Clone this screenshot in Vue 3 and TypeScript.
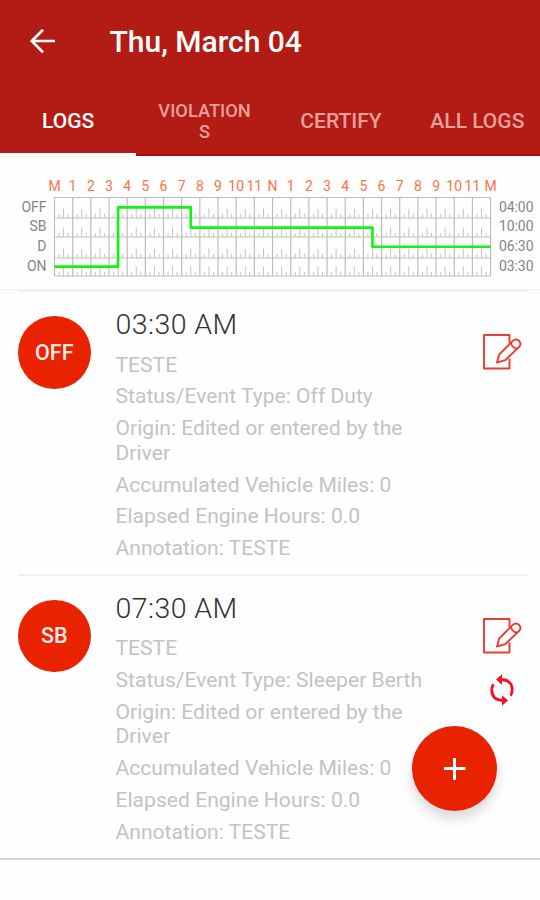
<script setup lang="ts">
interface LogEntry {
  code: string
  time: string
  lines: string[]
  refresh: boolean
}

const tabs: string[] = ['LOGS', 'VIOLATIONS', 'CERTIFY', 'ALL LOGS']

const hours: string[] = [
  'M', '1', '2', '3', '4', '5', '6', '7', '8', '9', '10', '11',
  'N', '1', '2', '3', '4', '5', '6', '7', '8', '9', '10', '11', 'M',
]

const left = 54.5
const step = 18.17
const right = left + step * 24
const rowEdges: number[] = [39.5, 60, 79, 100, 118]

const rows = [
  { label: 'OFF', total: '04:00', y: 49.2 },
  { label: 'SB', total: '10:00', y: 68.7 },
  { label: 'D', total: '06:30', y: 88.5 },
  { label: 'ON', total: '03:30', y: 108.2 },
]

const x = (hour: number): number => left + hour * step

const ticks = rowEdges.slice(1).map((edge) =>
  hours.slice(0, 24).map((_, h) =>
    `M${x(h + 0.25)} ${edge}v-4M${x(h + 0.5)} ${edge}v-9.5M${x(h + 0.75)} ${edge}v-4`,
  ).join(''),
).join('')

const dutyLine = `M${x(0)} 108.6H${x(3.5)}V49.4H${x(7.5)}V69.6H${x(17.5)}V88.8H${right}`

const entries: LogEntry[] = [
  {
    code: 'OFF',
    time: '03:30 AM',
    lines: [
      'TESTE',
      'Status/Event Type: Off Duty',
      'Origin: Edited or entered by the Driver',
      'Accumulated Vehicle Miles: 0',
      'Elapsed Engine Hours: 0.0',
      'Annotation: TESTE',
    ],
    refresh: false,
  },
  {
    code: 'SB',
    time: '07:30 AM',
    lines: [
      'TESTE',
      'Status/Event Type: Sleeper Berth',
      'Origin: Edited or entered by the Driver',
      'Accumulated Vehicle Miles: 0',
      'Elapsed Engine Hours: 0.0',
      'Annotation: TESTE',
    ],
    refresh: true,
  },
]
</script>

<template>
  <div class="screen">
    <header class="header">
      <div class="toolbar">
        <svg class="back" width="28" height="26" viewBox="0 0 28 26" fill="none" stroke="#fff" stroke-width="2.7">
          <path d="M26 12H3M14 .8L2.8 12L14 23.2" />
        </svg>
        <h1 class="title">Thu, March 04</h1>
      </div>
      <nav class="tabs">
        <button v-for="(tab, i) in tabs" :key="tab" class="tab" :class="{ active: i === 0, wrapped: i === 1 }">
          <span>{{ tab }}</span>
        </button>
      </nav>
    </header>

    <section class="chart">
      <svg width="540" height="131" viewBox="0 0 540 131">
        <g class="hours">
          <text v-for="(h, i) in hours" :key="i" :x="x(i)" y="33">{{ h }}</text>
        </g>
        <path class="ticks" :d="ticks" />
        <path v-for="(edge, i) in rowEdges" :key="'r' + i" class="grid" :d="`M${left} ${edge}H${right}`" />
        <path v-for="(h, i) in hours" :key="'c' + i" class="grid" :d="`M${x(i)} 39.5V118`" />
        <g v-for="row in rows" :key="row.label" class="labels">
          <text class="name" x="46.5" :y="row.y + 4.5">{{ row.label }}</text>
          <text x="499" :y="row.y + 4.5" textLength="34.5">{{ row.total }}</text>
        </g>
        <path class="duty" :d="dutyLine" />
      </svg>
    </section>

    <main class="list">
      <article v-for="entry in entries" :key="entry.code" class="entry">
        <div class="badge">{{ entry.code }}</div>
        <div class="details">
          <h2 class="time">{{ entry.time }}</h2>
          <p v-for="line in entry.lines" :key="line" class="line">{{ line }}</p>
        </div>
        <div class="actions">
          <svg width="40" height="36" viewBox="0 0 40 36" fill="none" stroke="#ea3c31" stroke-width="1.9" stroke-linejoin="round">
            <path d="M27.5 9.5V1H2V34.5H27.5V24.5" />
            <path d="M15 28.5L17.2 20.5L30.8 6.8Q34.2 4 37.2 7Q39.8 10 37 13L23.2 26.2Z" />
            <path d="M29 8.6Q29.7 13.8 35.2 14.7" />
          </svg>
          <svg v-if="entry.refresh" class="sync" width="26" height="32" viewBox="0 0 26 32" fill="none" stroke="#ee1620" stroke-width="2.8">
            <path d="M12 5.5Q23.2 6 23.2 16Q23.2 19 21.6 21.8M14 26.5Q2.8 26 2.8 16Q2.8 13 4.4 10.2" />
            <path fill="#ee1620" stroke="none" d="M13 .3V10.8L7 5.5ZM13 31.7V21.2L19 26.5Z" />
          </svg>
        </div>
      </article>
    </main>

    <button class="fab" aria-label="Add">
      <svg width="22" height="22" viewBox="0 0 22 22" stroke="#fff" stroke-width="3">
        <path d="M10.5 0V22M0 10.5H21.5" />
      </svg>
    </button>
  </div>
</template>

<style>
body {
  margin: 0;
  background: #fefefe;
}
</style>

<style scoped>
.screen {
  position: relative;
  width: 540px;
  height: 900px;
  overflow: hidden;
  background: #fefefe;
  font-family: Roboto, sans-serif;
}

.header {
  box-sizing: border-box;
  height: 156px;
  background: #b31b15;
  border-bottom: 2px solid #ac0b0c;
}

.toolbar {
  display: flex;
  align-items: center;
  height: 84px;
  padding-left: 29px;
}

.title {
  margin: 0 0 0 52.5px;
  color: #fff;
  font-size: 30px;
  font-weight: 500;
  line-height: 36px;
}

.tabs {
  display: flex;
  height: 73px;
}

.tab {
  box-sizing: border-box;
  flex: 0 0 136.4px;
  display: flex;
  align-items: center;
  justify-content: center;
  padding: 4px 20px 0;
  border: 0;
  border-bottom: 4px solid transparent;
  background: none;
  color: #e8a19c;
  font-family: inherit;
  font-size: 21px;
  font-weight: 500;
  white-space: nowrap;
}

.tab.active {
  color: #fff;
  border-bottom-color: #f8f8f8;
}

.tab.wrapped {
  font-size: 18.3px;
  line-height: 21px;
  white-space: normal;
  word-break: break-all;
}

.chart {
  box-sizing: border-box;
  height: 134px;
  padding-top: 2px;
  border-bottom: 1px solid #f3f3f3;
}

.chart svg {
  display: block;
}

.hours text {
  fill: #fb7444;
  font-size: 14px;
  text-anchor: middle;
}

.labels text {
  fill: #858585;
  font-size: 14px;
}

.labels .name {
  text-anchor: end;
}

.grid {
  stroke: #bdbdbd;
  stroke-width: 1.2;
}

.ticks {
  stroke: #c4c4c4;
  stroke-width: 1;
}

.duty {
  fill: none;
  stroke: #12f312;
  stroke-width: 2.6;
  stroke-linejoin: round;
}

.list {
  border-bottom: 2px solid #d5d5d5;
}

.entry {
  box-sizing: border-box;
  display: flex;
  height: 284px;
  margin-left: 18px;
  margin-right: 13px;
  border-top: 2px solid #f0f0f0;
}

.entry + .entry {
  margin-top: -0.5px;
}

.entry .badge {
  display: flex;
  align-items: center;
  justify-content: center;
  width: 72.5px;
  height: 72.5px;
  margin-top: 24px;
  border-radius: 50%;
  background: #e92200;
  color: #ffe9e4;
  font-size: 21.5px;
  font-weight: 500;
}

.details {
  width: 320px;
  margin-left: 25px;
  padding-top: 16px;
}

.time {
  margin: 0 0 10.5px;
  color: #333;
  font-size: 28.5px;
  font-weight: 300;
  line-height: 34px;
  letter-spacing: 0.45px;
}

.line {
  margin: 0 0 7px;
  color: #c3c3c3;
  font-size: 21.1px;
  line-height: 24.8px;
}

.actions {
  display: flex;
  flex-direction: column;
  align-items: center;
  width: 40px;
  margin-left: 46px;
  padding-top: 42px;
}

.sync {
  margin-top: 20.5px;
}

.fab {
  position: absolute;
  left: 412px;
  top: 726px;
  display: flex;
  align-items: center;
  justify-content: center;
  width: 85px;
  height: 85px;
  padding: 0;
  border: 0;
  border-radius: 50%;
  background: #e92200;
  box-shadow: 0 8px 12px rgba(0, 0, 0, 0.14);
}
</style>
